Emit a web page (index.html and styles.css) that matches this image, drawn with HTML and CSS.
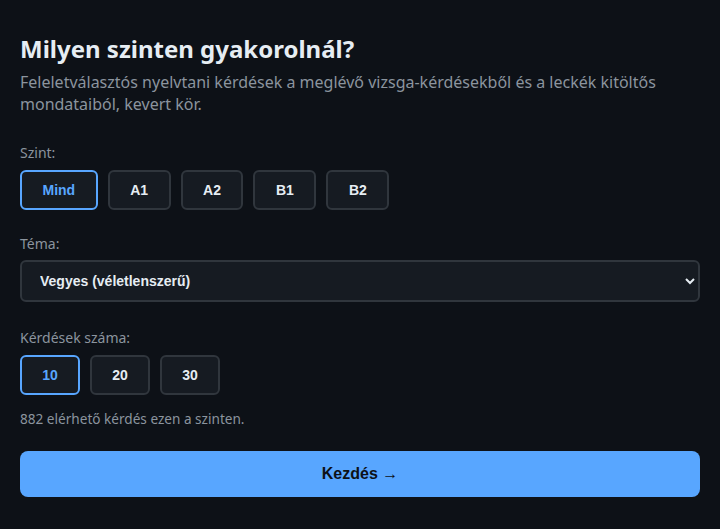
FILE: index.html
```html
<!DOCTYPE html>
<html lang="hu">
<head>
  <meta charset="UTF-8">
  <meta name="viewport" content="width=device-width, initial-scale=1.0">
  <title>Gyakorlás</title>
  <link rel="stylesheet" href="styles.css">
</head>
<body>
  <div class="setup">
    <h1 class="cim">Milyen szinten gyakorolnál?</h1>
    <p class="leiras">Feleletválasztós nyelvtani kérdések a meglévő vizsga-kérdésekből és a leckék kitöltős mondataiból, kevert kör.</p>

    <div class="mezo">
      <label class="cimke">Szint:</label>
      <div class="gombok">
        <button class="valaszto aktiv">Mind</button>
        <button class="valaszto">A1</button>
        <button class="valaszto">A2</button>
        <button class="valaszto">B1</button>
        <button class="valaszto">B2</button>
      </div>
    </div>

    <div class="mezo tema">
      <label class="cimke" for="tema">Téma:</label>
      <select class="lista" id="tema">
        <option>Vegyes (véletlenszerű)</option>
      </select>
    </div>

    <div class="mezo">
      <label class="cimke">Kérdések száma:</label>
      <div class="gombok">
        <button class="valaszto szam aktiv">10</button>
        <button class="valaszto szam">20</button>
        <button class="valaszto szam">30</button>
      </div>
    </div>

    <p class="info">882 elérhető kérdés ezen a szinten.</p>

    <button class="kezdes">Kezdés →</button>
  </div>
</body>
</html>
```

FILE: styles.css
```css
body {
  margin: 0;
  background: #0d1117;
  color: #e6edf3;
  font-family: "Noto Sans", sans-serif;
}
.setup {
  padding: 33px 20px 20px;
}
.cim {
  margin: 0 0 6px;
  font-size: 24px;
  line-height: 32px;
  font-weight: 700;
}
.leiras {
  margin: 0 0 28px;
  font-size: 16px;
  line-height: 22px;
  color: #8b949e;
}
.mezo {
  margin-bottom: 24px;
}
.mezo.tema {
  margin-bottom: 26px;
}
.cimke {
  display: block;
  margin-bottom: 6px;
  font-size: 14px;
  line-height: 20px;
  color: #8b949e;
}
.gombok {
  display: flex;
  gap: 10px;
  padding-top: 1px;
}
.valaszto {
  height: 40px;
  padding: 0 20.5px;
  min-width: 62px;
  font-family: "Liberation Sans", Arial, sans-serif;
  font-size: 14px;
  font-weight: 700;
  color: #e6edf3;
  background: #161b22;
  border: 2px solid #30363d;
  border-radius: 6px;
  cursor: pointer;
}
.valaszto.aktiv {
  color: #58a6ff;
  border-color: #58a6ff;
}
.valaszto.szam {
  min-width: 60px;
  padding: 0 20px;
}
.lista {
  width: 100%;
  height: 42px;
  padding: 0 14px;
  font-family: "Liberation Sans", Arial, sans-serif;
  font-size: 14px;
  font-weight: 700;
  color: #e6edf3;
  background: #161b22;
  border: 2px solid #30363d;
  border-radius: 6px;
}
.info {
  margin: -10px 0 22px;
  font-size: 13.6px;
  line-height: 20px;
  color: #8b949e;
}
.kezdes {
  width: 100%;
  height: 46px;
  font-family: "Liberation Sans", Arial, sans-serif;
  font-size: 16px;
  font-weight: 700;
  color: #0d1117;
  background: #58a6ff;
  border: none;
  border-radius: 8px;
  cursor: pointer;
}
```
